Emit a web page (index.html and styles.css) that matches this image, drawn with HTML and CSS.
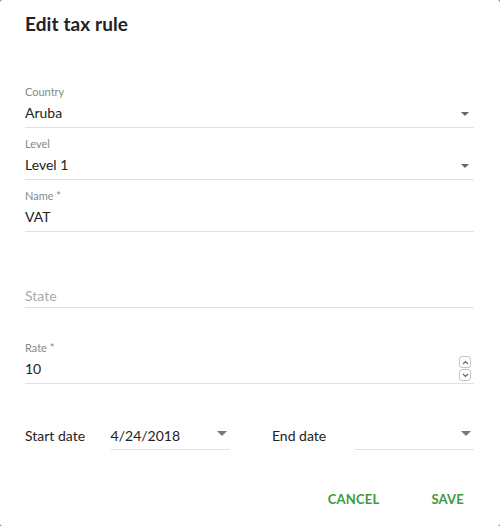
FILE: index.html
```html
<!DOCTYPE html>
<html>
<head>
<meta charset="utf-8">
<link rel="stylesheet" href="styles.css">
</head>
<body>
<div class="dialog">
  <h1 class="title">Edit tax rule</h1>
  <div class="field first">
    <div class="label">Country</div>
    <div class="value">Aruba<span class="caret"></span></div>
  </div>
  <div class="field">
    <div class="label">Level</div>
    <div class="value">Level 1<span class="caret"></span></div>
  </div>
  <div class="field">
    <div class="label">Name *</div>
    <div class="value">VAT</div>
  </div>
  <div class="field state">
    <div class="value placeholder">State</div>
  </div>
  <div class="field rate">
    <div class="label">Rate *</div>
    <div class="value">10
      <span class="spin">
        <span class="spin-btn"><svg width="7" height="5" viewBox="0 0 7 5"><path d="M1 4 L3.5 1.5 L6 4" fill="none" stroke="#666" stroke-width="1.2"/></svg></span>
        <span class="spin-btn"><svg width="7" height="5" viewBox="0 0 7 5"><path d="M1 1 L3.5 3.5 L6 1" fill="none" stroke="#666" stroke-width="1.2"/></svg></span>
      </span>
    </div>
  </div>
  <div class="dates">
    <div class="date-label">Start date</div>
    <div class="date-input">4/24/2018<span class="dcaret"></span></div>
    <div class="date-label end">End date</div>
    <div class="date-input"><span class="dcaret"></span></div>
  </div>
  <div class="actions">
    <button class="btn">CANCEL</button>
    <button class="btn">SAVE</button>
  </div>
</div>
</body>
</html>
```
FILE: styles.css
```css
html { background: #8a8a8a; }
body { margin: 0; font-family: Lato, "Open Sans", sans-serif; color: #222; }
.dialog {
  width: 500px; height: 526px; box-sizing: border-box;
  background: #fff; border-radius: 3px;
  padding: 0 26px 0 25px;
  overflow: hidden;
}
.title {
  margin: 0; padding-top: 12px;
  font-size: 19px; line-height: 24px; font-weight: 700; color: #222;
  letter-spacing: 0.1px;
}
.field { border-bottom: 1px solid #e0e0e0; padding-bottom: 4px; margin-top: 9px; }
.field.first { margin-top: 49px; }
.label { font-size: 11px; line-height: 14px; color: #888; }
.value { position: relative; font-size: 14px; line-height: 20px; margin-top: 4px; color: #222; }
.caret {
  position: absolute; right: 5px; top: 9px;
  width: 0; height: 0;
  border-left: 4px solid transparent; border-right: 4px solid transparent;
  border-top: 4px solid #666;
}
.field.state { margin-top: 54px; padding-bottom: 1px; }
.field.state .value { margin-top: 0; }
.placeholder { color: #aaa; }
.field.rate { margin-top: 33px; }
.spin {
  position: absolute; right: 3px; top: -3px;
  display: flex; flex-direction: column; gap: 1px;
}
.spin-btn {
  width: 10px; height: 10px; border: 1px solid #c4c4c4; border-radius: 3px;
  display: flex; align-items: center; justify-content: center;
}
.dates { display: flex; align-items: flex-end; margin-top: 42px; }
.date-label { width: 86px; font-size: 14px; line-height: 20px; padding-bottom: 4px; }
.date-label.end { width: 83px; margin-left: 42px; }
.date-input {
  position: relative; width: 120px; font-size: 14px; line-height: 20px;
  padding-bottom: 3px; border-bottom: 1px solid #e0e0e0; height: 20px;
}
.dcaret {
  position: absolute; right: 3px; top: 5px; width: 0; height: 0;
  border-left: 5px solid transparent; border-right: 5px solid transparent;
  border-top: 5px solid #777;
}
.actions { display: flex; justify-content: flex-end; gap: 32px; margin-top: 31px; padding-right: 0; }
.btn {
  background: none; border: 0; padding: 0 10px; height: 36px;
  font-family: Lato, "Open Sans", sans-serif; font-size: 13px; font-weight: 700;
  color: #3d9b3d; letter-spacing: 0.2px; cursor: pointer;
}
```
